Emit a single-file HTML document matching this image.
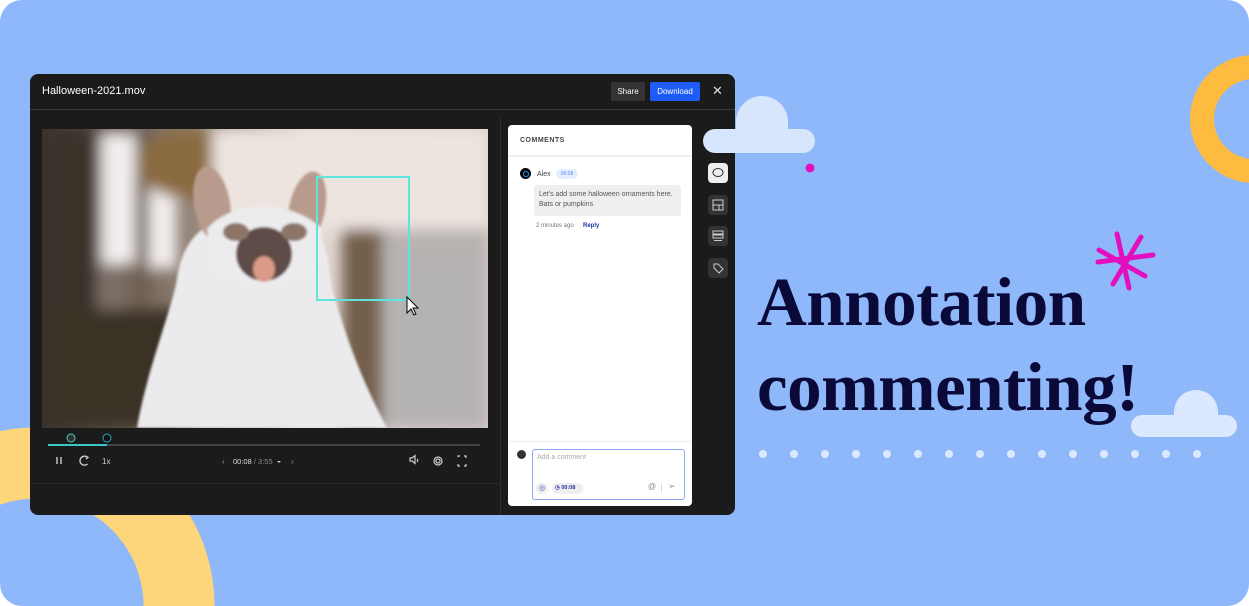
<!DOCTYPE html>
<html><head><meta charset="utf-8"><style>
*{margin:0;padding:0;box-sizing:border-box}
html,body{width:1249px;height:606px;overflow:hidden}
body{background:#fff;font-family:"Liberation Sans",sans-serif;position:relative}
.bg{position:absolute;left:0;top:0;width:1249px;height:606px;background:#8fb8fb;border-radius:22px;overflow:hidden}
.abs{position:absolute}
.win{position:absolute;left:30px;top:74px;width:705px;height:441px;background:#1b1b1b;border-radius:8px;overflow:hidden}
.t{position:absolute;color:#fff;white-space:nowrap}
.title{position:absolute;left:757px;font-family:"Liberation Serif",serif;font-weight:bold;color:#0a0938;font-size:69px;letter-spacing:-0.5px;white-space:nowrap;line-height:80px}
.side{position:absolute;left:708px;width:20px;height:20px;border-radius:4px;background:#333}
</style></head><body>
<div class="bg">
<svg class="abs" style="left:0;top:0" width="1249" height="606">
 <circle cx="36" cy="606" r="143" fill="none" stroke="#fdd57a" stroke-width="71"/>
 <circle cx="1254" cy="119" r="52" fill="none" stroke="#fdbb3f" stroke-width="24"/>
 <g stroke="#e20fbf" stroke-width="5" stroke-linecap="round">
  <line x1="1117" y1="234" x2="1129" y2="288"/>
  <line x1="1098" y1="262" x2="1153" y2="255"/>
  <line x1="1141" y1="237" x2="1113" y2="284"/>
  <line x1="1099" y1="250" x2="1145" y2="276"/>
 </g>
 <circle cx="810" cy="168" r="4.5" fill="#e20fbf"/>
 <g fill="#dbe8fd">
  <circle cx="1196" cy="412" r="22"/><rect x="1174" y="410" width="44" height="20"/>
  <rect x="1131" y="415" width="106" height="22" rx="11"/>
 </g>
 <g fill="#dce8fd">
  <circle cx="763" cy="454" r="4"/><circle cx="794" cy="454" r="4"/><circle cx="825" cy="454" r="4"/><circle cx="856" cy="454" r="4"/><circle cx="887" cy="454" r="4"/><circle cx="918" cy="454" r="4"/><circle cx="949" cy="454" r="4"/><circle cx="980" cy="454" r="4"/><circle cx="1011" cy="454" r="4"/><circle cx="1042" cy="454" r="4"/><circle cx="1073" cy="454" r="4"/><circle cx="1104" cy="454" r="4"/><circle cx="1135" cy="454" r="4"/><circle cx="1166" cy="454" r="4"/><circle cx="1197" cy="454" r="4"/>
 </g>
</svg>
<div class="title" style="top:262px">Annotation</div>
<div class="title" style="top:347px">commenting!</div>
</div>

<div class="win">
 <div class="t" style="left:12px;top:11px;font-size:11px">Halloween-2021.mov</div>
 <div class="abs" style="left:581px;top:8px;width:34px;height:19px;background:#333;border-radius:2px;color:#fff;font-size:8px;text-align:center;line-height:19px">Share</div>
 <div class="abs" style="left:620px;top:8px;width:50px;height:19px;background:#1f5cf7;border-radius:2px;color:#fff;font-size:8px;text-align:center;line-height:19px">Download</div>
 <div class="t" style="left:682px;top:9px;font-size:13px;color:#ddd">✕</div>
 <div class="abs" style="left:0;top:35px;width:705px;height:1px;background:#3a3a3a"></div>
 <div class="abs" style="left:470px;top:44px;width:1px;height:400px;background:#2e2e2e"></div>
 <div class="abs" style="left:0;top:409px;width:470px;height:1px;background:#2a2a2a"></div>
</div>

<!-- cloud over window -->
<svg class="abs" style="left:700px;top:92px" width="120" height="64">
 <g fill="#d7e6fd">
  <circle cx="62" cy="30" r="26"/><rect x="36" y="30" width="52" height="20"/>
  <rect x="3" y="37" width="112" height="24" rx="12"/>
 </g>
</svg>

<!-- video -->
<svg class="abs" style="left:42px;top:129px" width="446" height="299">
 <defs>
  <filter id="b" x="-20%" y="-20%" width="140%" height="140%"><feGaussianBlur stdDeviation="7"/></filter>
  <filter id="b2"><feGaussianBlur stdDeviation="1.2"/></filter>
  <linearGradient id="g1" x1="0" y1="0" x2="1" y2="0"><stop offset="0" stop-color="#3a332c"/><stop offset="0.3" stop-color="#8a7a6e"/><stop offset="0.6" stop-color="#e4d8d3"/><stop offset="1" stop-color="#d9cdc8"/></linearGradient>
 </defs>
 <rect width="446" height="299" fill="url(#g1)"/>
 <g filter="url(#b)">
  <rect x="0" y="0" width="55" height="299" fill="#3a332c"/>
  <rect x="55" y="0" width="30" height="200" fill="#7d7068"/>
  <rect x="60" y="5" width="40" height="130" fill="#f2eeee"/>
  <rect x="105" y="20" width="30" height="120" fill="#f2eeee"/>
  <rect x="93" y="0" width="14" height="270" fill="#6e5e50"/>
  <ellipse cx="150" cy="35" rx="55" ry="35" fill="#8a6a40"/>
  <rect x="0" y="180" width="140" height="119" fill="#3a3326"/>
  <rect x="170" y="0" width="276" height="100" fill="#ede4e0"/>
  <rect x="300" y="100" width="146" height="199" fill="#b8b2b1"/>
  <rect x="300" y="100" width="40" height="199" fill="#735e4c"/>
  <rect x="350" y="130" width="96" height="169" fill="#b5b2b4"/>
 </g>
 <g filter="url(#b2)">
  <path d="M95 299 C105 240 130 180 135 150 C140 110 165 90 190 90 L260 90 C285 100 285 130 290 160 C310 230 330 270 345 299 Z" fill="#ebebed"/>
  <ellipse cx="170" cy="75" rx="18" ry="38" fill="#b89b8c" transform="rotate(-10 170 75)"/>
  <ellipse cx="265" cy="80" rx="18" ry="38" fill="#b89b8c" transform="rotate(12 265 80)"/>
  <path d="M165 100 C190 70 250 70 280 100 L275 140 C240 160 200 160 170 140 Z" fill="#ececee"/>
  <ellipse cx="222" cy="125" rx="28" ry="27" fill="#5e4c46"/>
  <ellipse cx="222" cy="140" rx="11" ry="13" fill="#d89a86"/>
  <ellipse cx="194" cy="103" rx="13" ry="9" fill="#8c7468"/>
  <ellipse cx="252" cy="103" rx="13" ry="9" fill="#8c7468"/>
 </g>
 <rect x="275" y="48" width="92" height="123" fill="none" stroke="#5ee3dd" stroke-width="2"/>
 <path d="M365 168 L365 184 L369 180 L372 186 L374 185 L371 179 L376 179 Z" fill="#fff" stroke="#000" stroke-width="1"/>
</svg>

<!-- timeline -->
<svg class="abs" style="left:30px;top:428px" width="470" height="50">
 <rect x="18" y="16" width="432" height="2" fill="#444"/>
 <rect x="18" y="16" width="59" height="2" fill="#3cc9c6"/>
 <circle cx="41" cy="10" r="4" fill="#333" stroke="#4cc" stroke-width="1"/>
 <circle cx="77" cy="10" r="4" fill="#111" stroke="#2ab" stroke-width="1"/>
 <g stroke="#ccc" stroke-width="1.4" fill="none">
  <line x1="27" y1="29" x2="27" y2="36"/><line x1="31" y1="29" x2="31" y2="36"/>
  <path d="M57 29 A4.5 4.5 0 1 0 57.5 36"/>
  <path d="M56 28 L58 29.5 L56 31"/>
 </g>
 <text x="72" y="36" fill="#ccc" font-size="8" font-family="Liberation Sans">1x</text>
 <text x="192" y="36" fill="#999" font-size="8" font-family="Liberation Sans">‹</text>
 <text x="203" y="36" fill="#ddd" font-size="7.5" font-family="Liberation Sans">00:08 <tspan fill="#888">/ 3:55</tspan></text>
 <path d="M247 33 l2 2 l2-2z" fill="#ccc"/>
 <text x="261" y="36" fill="#999" font-size="8" font-family="Liberation Sans">›</text>
 <g stroke="#ccc" stroke-width="1.2" fill="none">
  <path d="M380 30 h2 l3-2.5 v8 l-3-2.5 h-2z"/><path d="M387 31 q1.5 1.5 0 3"/>
  <circle cx="408" cy="33" r="2"/><circle cx="408" cy="33" r="4"/>
  <path d="M428 29 v-1 h2 M434 28 h2 v2 M436 36 v2 h-2 M430 38 h-2 v-2"/>
 </g>
</svg>

<!-- comments panel -->
<div class="abs" style="left:508px;top:125px;width:184px;height:381px;background:#fff;border-radius:4px;overflow:hidden">
 <div class="abs" style="left:12px;top:12px;font-size:7px;font-weight:bold;color:#444;letter-spacing:0.5px">COMMENTS</div>
 <div class="abs" style="left:0;top:30px;width:184px;height:2px;background:#eee"></div>
 <div class="abs" style="left:12px;top:43px;width:11px;height:11px;border-radius:50%;background:#000"><div style="margin:2.5px;width:6px;height:6px;border:1.5px solid #2aa4ff;border-radius:50%"></div></div>
 <div class="abs" style="left:29px;top:46px;font-size:7px;color:#444">Alex</div>
 <div class="abs" style="left:48px;top:44px;width:22px;height:10px;border-radius:5px;background:#e3eeff;color:#5a8cf0;font-size:5px;text-align:center;line-height:10px">00:08</div>
 <div class="abs" style="left:26px;top:60px;width:147px;height:31px;background:#efefef;border-radius:3px;font-size:7px;color:#555;padding:5px;line-height:10px">Let's add some halloween ornaments here.<br>Bats or pumpkins</div>
 <div class="abs" style="left:28px;top:98px;font-size:6px;color:#777">2 minutes ago</div>
 <div class="abs" style="left:75px;top:98px;font-size:6px;color:#2130a8;font-weight:bold">Reply</div>
 <div class="abs" style="left:0;top:316px;width:184px;height:1px;background:#eee"></div>
 <div class="abs" style="left:9px;top:325px;width:9px;height:9px;border-radius:50%;background:#333"></div>
 <div class="abs" style="left:24px;top:324px;width:153px;height:51px;border:1px solid #8aa8f5;border-radius:3px">
  <div class="abs" style="left:4px;top:4px;font-size:7px;color:#aaa">Add a comment</div>
  <div class="abs" style="left:3px;top:33px;width:12px;height:11px;border-radius:5px;background:#eee;color:#3344bb;font-size:7px;text-align:center;line-height:11px">◎</div>
  <div class="abs" style="left:19px;top:33px;width:31px;height:11px;border-radius:5px;background:#eee;color:#2233aa;font-size:5.5px;font-weight:bold;line-height:11px;padding-left:3px">◷ 00:08</div>
  <div class="abs" style="left:115px;top:32px;font-size:8px;color:#888">@</div>
  <div class="abs" style="left:128px;top:33px;width:1px;height:10px;background:#ddd"></div>
  <div class="abs" style="left:135px;top:31px;font-size:9px;color:#999">➢</div>
 </div>
</div>

<!-- sidebar -->
<div class="side" style="top:163px;background:#eee"><svg width="20" height="20"><ellipse cx="10" cy="9.5" rx="5" ry="4" fill="none" stroke="#333" stroke-width="1"/></svg></div>
<div class="side" style="top:195px"><svg width="20" height="20"><rect x="5" y="5" width="10" height="10" fill="none" stroke="#ccc"/><line x1="5" y1="10" x2="15" y2="10" stroke="#ccc"/><line x1="11" y1="10" x2="11" y2="15" stroke="#ccc"/></svg></div>
<div class="side" style="top:226px"><svg width="20" height="20"><rect x="5" y="5" width="10" height="3" fill="none" stroke="#ccc"/><rect x="5" y="9" width="10" height="3" fill="none" stroke="#ccc"/><line x1="6" y1="14.5" x2="14" y2="14.5" stroke="#ccc"/></svg></div>
<div class="side" style="top:258px"><svg width="20" height="20"><path d="M6 6 h4 l5 5 l-4 4 l-5-5z" fill="none" stroke="#ccc"/></svg></div>
</body></html>
